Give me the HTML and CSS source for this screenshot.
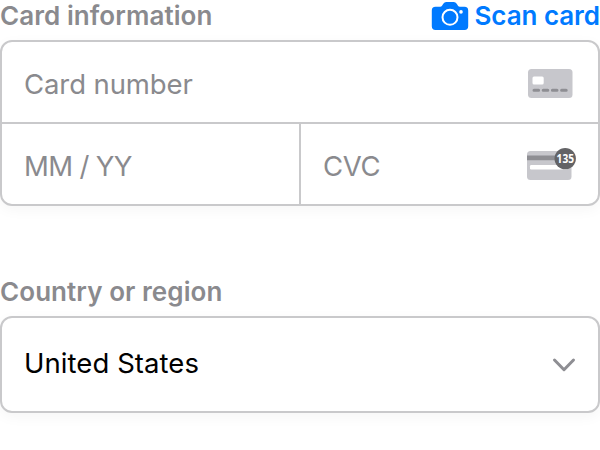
FILE: index.html
```html
<!DOCTYPE html>
<html lang="en">
<head>
<meta charset="utf-8">
<title>Card information</title>
<link rel="stylesheet" href="styles.css">
</head>
<body>
<main class="form">
  <header class="heading">
    <h2 class="label label-card">Card information</h2>
    <a class="scan">
      <svg class="camera" width="38" height="30" viewBox="0 0 38 30">
        <path fill="#007aff" d="M4.5 5.8H9.2Q10.4 5.8 11 4.7L12.3 2.8Q13.4 1 15.2 1H22.8Q24.6 1 25.7 2.8L27 4.7Q27.6 5.8 28.8 5.8H33.5Q37.2 5.8 37.2 9.5V25.3Q37.2 29 33.5 29H4.5Q.8 29 .8 25.3V9.5Q.8 5.8 4.5 5.8Z"/>
        <circle cx="19" cy="16.3" r="7.5" fill="none" stroke="#fff" stroke-width="2"/>
        <circle cx="30" cy="10.9" r="1.8" fill="#fff"/>
      </svg>
      <span class="scan-text">Scan card</span>
    </a>
  </header>
  <section class="box card-box">
    <div class="field number"><span class="ph-number">Card number</span>
      <svg class="card-icon" width="46" height="30" viewBox="0 0 46 30">
        <rect x="1" y="1" width="44.5" height="29" rx="3.5" fill="#c7c7cc"/>
        <rect x="5.5" y="8.5" width="11.2" height="8" rx="1.5" fill="#fff"/>
        <path d="M7 22.2h4.6M16.2 22.2h4.6M25.4 22.2h4.6M34.6 22.2h4.6" stroke="#8e8e93" stroke-width="3" stroke-linecap="round"/>
      </svg>
    </div>
    <div class="row">
      <div class="field expiry"><span class="ph-expiry">MM / YY</span></div>
      <div class="field cvc"><span class="ph-cvc">CVC</span>
        <svg class="cvc-icon" width="50" height="34" viewBox="0 0 50 34">
          <rect x="1" y="4" width="44.5" height="29" rx="3.5" fill="#c7c7cc"/>
          <path d="M1 8.5h44.5v4.7H1z" fill="#8e8e93"/>
          <rect x="4" y="18" width="38" height="4.5" rx="1.2" fill="#fff"/>
          <circle cx="39.2" cy="11.6" r="10.7" fill="#636366"/>
          <text class="cvc-digits" x="39.3" y="15.7" text-anchor="middle" textLength="17.4" lengthAdjust="spacingAndGlyphs">135</text>
        </svg>
      </div>
    </div>
  </section>
  <h2 class="label label-country">Country or region</h2>
  <section class="box country"><span class="country-text">United States</span>
    <svg width="24" height="16" viewBox="0 0 24 16"><path d="M2.5 3 12 12.7 21.5 3" fill="none" stroke="#8e8e93" stroke-width="3" stroke-linecap="round" stroke-linejoin="round"/></svg>
  </section>
</main>
</body>
</html>
```
FILE: styles.css
```css
* { box-sizing: border-box; }
body {
  margin: 0;
  background: #fff;
  font-family: Inter, "Liberation Sans", sans-serif;
  color: #000;
}
.form { width: 600px; height: 450px; overflow: hidden; }
.heading {
  display: flex;
  justify-content: space-between;
  align-items: center;
  height: 32px;
  margin-bottom: 8px;
}
.label {
  margin: 0;
  font-size: 26px;
  line-height: 32px;
  font-weight: 600;
  letter-spacing: .07px;
  color: #8a8a8e;
  white-space: nowrap;
}
.scan {
  display: flex;
  align-items: center;
  gap: 5px;
  height: 32px;
  color: #007aff;
  font-size: 26px;
  line-height: 32px;
  font-weight: 600;
  letter-spacing: -.05px;
  white-space: nowrap;
}
.box {
  border: 2px solid #c9c9cb;
  border-radius: 12px;
  background: #fff;
  box-shadow: 0 4px 14px rgba(0, 0, 0, .04);
}
.card-box { height: 166px; }
.field {
  display: flex;
  align-items: center;
  justify-content: space-between;
  height: 80px;
  padding: 2px 25px 0 22px;
  font-size: 27.5px;
  line-height: 34px;
  color: #8a8a8e;
  white-space: nowrap;
}
.ph-number { padding-top: 1px; letter-spacing: -.1px; }
.ph-expiry { padding-top: 1px; letter-spacing: -.65px; }
.ph-cvc { padding-top: 1px; letter-spacing: -.3px; }
.row { display: flex; border-top: 2px solid #c9c9cb; }
.expiry { width: 297px; }
.cvc { flex: 1; border-left: 2px solid #c9c9cb; padding: 2px 22px 0 22px; }
.cvc-icon { margin-top: -2px; }
.cvc-digits { font: 700 12px "Open Sans", sans-serif; fill: #fff; }
.label-country { margin-top: 70px; }
.country {
  display: flex;
  align-items: center;
  justify-content: space-between;
  height: 97px;
  margin-top: 8px;
  padding: 0 22px 0 22px;
  font-size: 27.5px;
}
.country-text { padding-bottom: 4px; letter-spacing: .06px; }
```
